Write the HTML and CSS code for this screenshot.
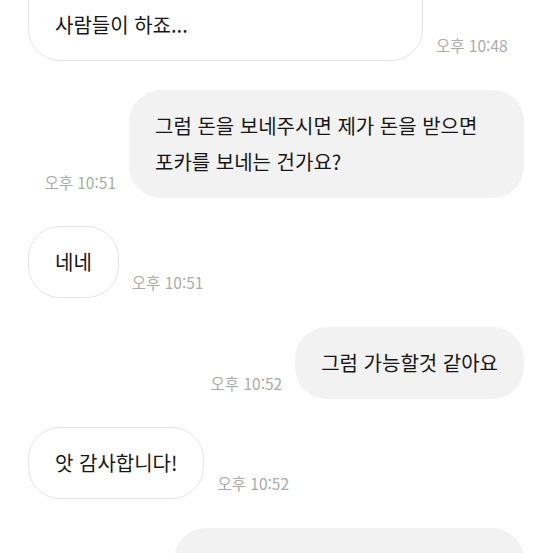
FILE: index.html
```html
<!DOCTYPE html>
<html lang="ko">
<head>
  <meta charset="UTF-8" />
  <meta name="viewport" content="width=device-width, initial-scale=1.0" />
  <title>채팅</title>
  <link rel="stylesheet" href="styles.css">
</head>
<body>
  <div class="chat">
    <div class="row in">
      <div class="bubble">그건 보통 직거래보다 택배를 원하는 사람들이 하죠...</div>
      <span class="time">오후 10:48</span>
    </div>
    <div class="row out">
      <span class="time">오후 10:51</span>
      <div class="bubble">그럼 돈을 보네주시면 제가 돈을 받으면 포카를 보네는 건가요?</div>
    </div>
    <div class="row in">
      <div class="bubble">네네</div>
      <span class="time">오후 10:51</span>
    </div>
    <div class="row out">
      <span class="time">오후 10:52</span>
      <div class="bubble">그럼 가능할것 같아요</div>
    </div>
    <div class="row in">
      <div class="bubble">앗 감사합니다!</div>
      <span class="time">오후 10:52</span>
    </div>
    <div class="row out">
      <span class="time">오후 10:53</span>
      <div class="bubble">네 그럼 계좌번호 바로 알려드릴게요</div>
    </div>
  </div>
</body>
</html>
```

FILE: styles.css
```css
body {
  margin: 0;
  background: #fff;
  color: #161616;
  font-family: "Noto Sans CJK KR", "Noto Sans", sans-serif;
  overflow: hidden;
  height: 553px;
}
.chat {
  display: flex;
  flex-direction: column;
  gap: 28.5px;
  margin-top: -47px;
  padding: 0 29px 0 28px;
}
.row {
  display: flex;
  align-items: flex-end;
  gap: 13px;
}
.row.out {
  justify-content: flex-end;
}
.bubble {
  max-width: 395px;
  box-sizing: border-box;
  padding: 18px 26px;
  font-size: 20px;
  line-height: 36px;
  border-radius: 32px;
  word-break: keep-all;
}
.row.in .bubble {
  background: #fff;
  border: 1px solid #e4e4e4;
  padding: 17px 26px;
}
.row.out .bubble {
  background: #f2f2f2;
}
.time {
  flex-shrink: 0;
  font-size: 15.5px;
  line-height: 20px;
  color: #ababab;
  margin-bottom: 6px;
}
```
